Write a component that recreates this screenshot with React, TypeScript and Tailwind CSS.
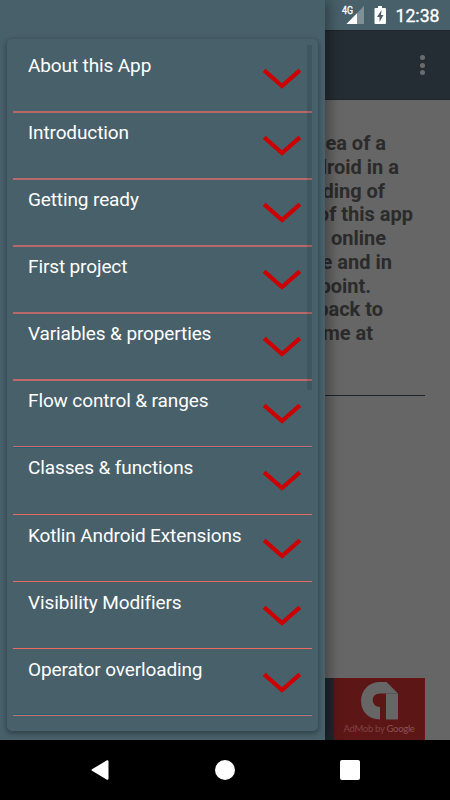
import React from 'react'

const chapters = [
  {id:1,title:"About this App",pad:"pt-[8px]",line:"h-[2px] bg-[#b9686a]"},
  {id:2,title:"Introduction",pad:"pt-[8px]",line:"h-[2px] bg-[#b9686a]"},
  {id:3,title:"Getting ready",pad:"pt-[8px]",line:"h-[2px] bg-[#b9686a]"},
  {id:4,title:"First project",pad:"pt-[8px]",line:"h-[2px] bg-[#b9686a]"},
  {id:5,title:"Variables & properties",pad:"pt-[8px]",line:"h-[2px] bg-[#c0686a]"},
  {id:6,title:"Flow control & ranges",pad:"pt-[8px]",line:"h-[2px] border-b border-b-[#236371] bg-[#cd6a68]"},
  {id:7,title:"Classes & functions",pad:"pt-[8px]",line:"h-px bg-[#e96a60]"},
  {id:8,title:"Kotlin Android Extensions",pad:"pt-[9px]",line:"h-px bg-[#e96a60]"},
  {id:9,title:"Visibility Modifiers",pad:"pt-[9px]",line:"h-px bg-[#e96a60]"},
  {id:10,title:"Operator overloading",pad:"pt-[9px]",line:"h-[2px] border-t border-t-[#1c6475] bg-[#c9706e]"},
]

const intro = [
  {text:"idea of a",pad:"pr-[64px]"},
  {text:"Android in a",pad:"pr-[51px]"},
  {text:"understanding of",pad:"pr-[65px]"},
  {text:"of this app",pad:"pr-[37px]"},
  {text:"online",pad:"pr-[64px]"},
  {text:"free and in",pad:"pr-[58px]"},
  {text:"point.",pad:"pr-[79px]"},
  {text:"feedback to",pad:"pr-[67px]"},
  {text:"me at",pad:"pr-[77px]"},
]

const StatusBar = () => {
  return (
    <div className="absolute top-0 right-0 flex h-[30px] w-[120px] text-white">
      <svg width="120" height="30" viewBox="0 0 120 30">
        <path d="M34 6V24H16.500Z" fill="#7f9097" />
        <path d="M27 13.200V24H16.500Z" fill="#fff" />
        <path d="M48 6h4v2h3a1 1 0 0 1 1 1v14a1 1 0 0 1-1 1H45.500a1 1 0 0 1-1-1V9a1 1 0 0 1 1-1H48z" fill="#fff" />
        <path d="M51.500 10L47 17h2.500v5L53.500 15H51z" fill="#48606a" />
        <text x="12" y="14" fontSize="10.500" fill="#fff" stroke="#fff" strokeWidth="0.350" textLength="11" lengthAdjust="spacingAndGlyphs">4G</text>
        <text x="65.500" y="22" fontSize="18.500" fill="#fff" stroke="#fff" strokeWidth="0.350" textLength="44" lengthAdjust="spacingAndGlyphs">12:38</text>
      </svg>
    </div>
  )
}

const Page = () => {
  return (
    <div className="flex h-[740px] w-full flex-col bg-[#666666]">
      <div className="h-[30px] shrink-0 bg-[#48606a]"></div>
      <div className="flex h-[70px] shrink-0 items-center justify-end border-t border-b border-t-[#1d252b] border-b-[#1f272d] bg-[#252d34] pr-[25px]">
        <div className="flex flex-col gap-[2.500px]">
          <div className="h-[5px] w-[5px] rounded-full bg-[#6b6b6b]"></div>
          <div className="h-[5px] w-[5px] rounded-full bg-[#6b6b6b]"></div>
          <div className="h-[5px] w-[5px] rounded-full bg-[#6b6b6b]"></div>
        </div>
      </div>
      <div className="mt-[32px] flex flex-col text-right text-[20px] font-bold leading-[23.750px] text-[#2b2b2b]">
        {intro.map((row) => (
          <p key={row.text} className={row.pad}>{row.text}</p>
        ))}
      </div>
      <div className="mt-[49px] mr-[25px] ml-[25px] h-px shrink-0 bg-[#1a272e]"></div>
      <div className="mt-auto mr-[25px] flex h-[62px] shrink-0 justify-end bg-[#1f272b]">
        <div className="flex w-[91px] flex-col items-center border-t border-r border-[#6a1414] bg-[#5c1616] pt-[2px]">
          <svg width="39" height="39" viewBox="0 0 39 39">
            <path d="M20 38.500C8 38.500 1 30 1 20C1 9 9 1 20 1H26.500L38 12.500V38.500H26V12.500H20C15 12.500 12.800 15.500 12.800 19C12.800 23 15.500 26 20 26V38.500Z" fill="#666666" />
            <path d="M26 12.500H38" stroke="#555555" />
          </svg>
          <p className="mt-[2px] whitespace-nowrap text-[9.500px] leading-[14px] tracking-[-0.290px] text-[#7d4343]" style={{fontFamily:'Lato, sans-serif'}}>AdMob by <span className="text-[#8a5353]">Google</span></p>
        </div>
      </div>
    </div>
  )
}

const Drawer = () => {
  return (
    <div className="absolute top-0 left-0 h-[740px] w-[325px] bg-[#48606a] pt-[39px] pl-[7px] shadow-[4px_0_12px_rgba(0,0,0,0.35)]">
      <div className="relative h-[692px] w-[311px] rounded-[5px] bg-[#48606a] px-[6px] pt-[7px] shadow-[0_2px_5px_1px_rgba(0,0,0,0.3)]">
        {chapters.map((chapter) => (
          <div key={chapter.id} className="flex h-[67px] flex-col justify-between">
            <div className={`flex items-start justify-between pr-[11px] pl-[15px] ${chapter.pad}`}>
              <h2 className="text-[19px] leading-[24px] tracking-[-0.120px] whitespace-nowrap text-white">{chapter.title}</h2>
              <svg width="38" height="20" viewBox="0 0 38 20" className="mt-[15px] shrink-0 overflow-visible">
                <path d="M1.200 1.400L19 17L36.800 1.400" fill="none" stroke="#cc0000" strokeWidth="4.200" />
              </svg>
            </div>
            <div className={chapter.line}></div>
          </div>
        ))}
        <div className="absolute top-[6px] right-[6px] h-[345px] w-[5px] bg-black/10"></div>
      </div>
    </div>
  )
}

const NavBar = () => {
  return (
    <div className="flex h-[60px] items-center justify-between bg-black pr-[90px] pl-[91px]">
      <svg width="18" height="20" viewBox="0 0 18 20">
        <path d="M16.500 1.200V18.800L1.500 10Z" fill="#fff" stroke="#fff" strokeWidth="2" strokeLinejoin="round" />
      </svg>
      <div className="h-[20px] w-[20px] rounded-full bg-white"></div>
      <div className="h-[20px] w-[20px] rounded-[2px] bg-white"></div>
    </div>
  )
}

const App = () => {
  return (
    <div className="relative h-[800px] w-[450px] overflow-hidden bg-black" style={{fontFamily:'Roboto, sans-serif'}}>
      <Page />
      <Drawer />
      <StatusBar />
      <NavBar />
    </div>
  )
}

export default App
